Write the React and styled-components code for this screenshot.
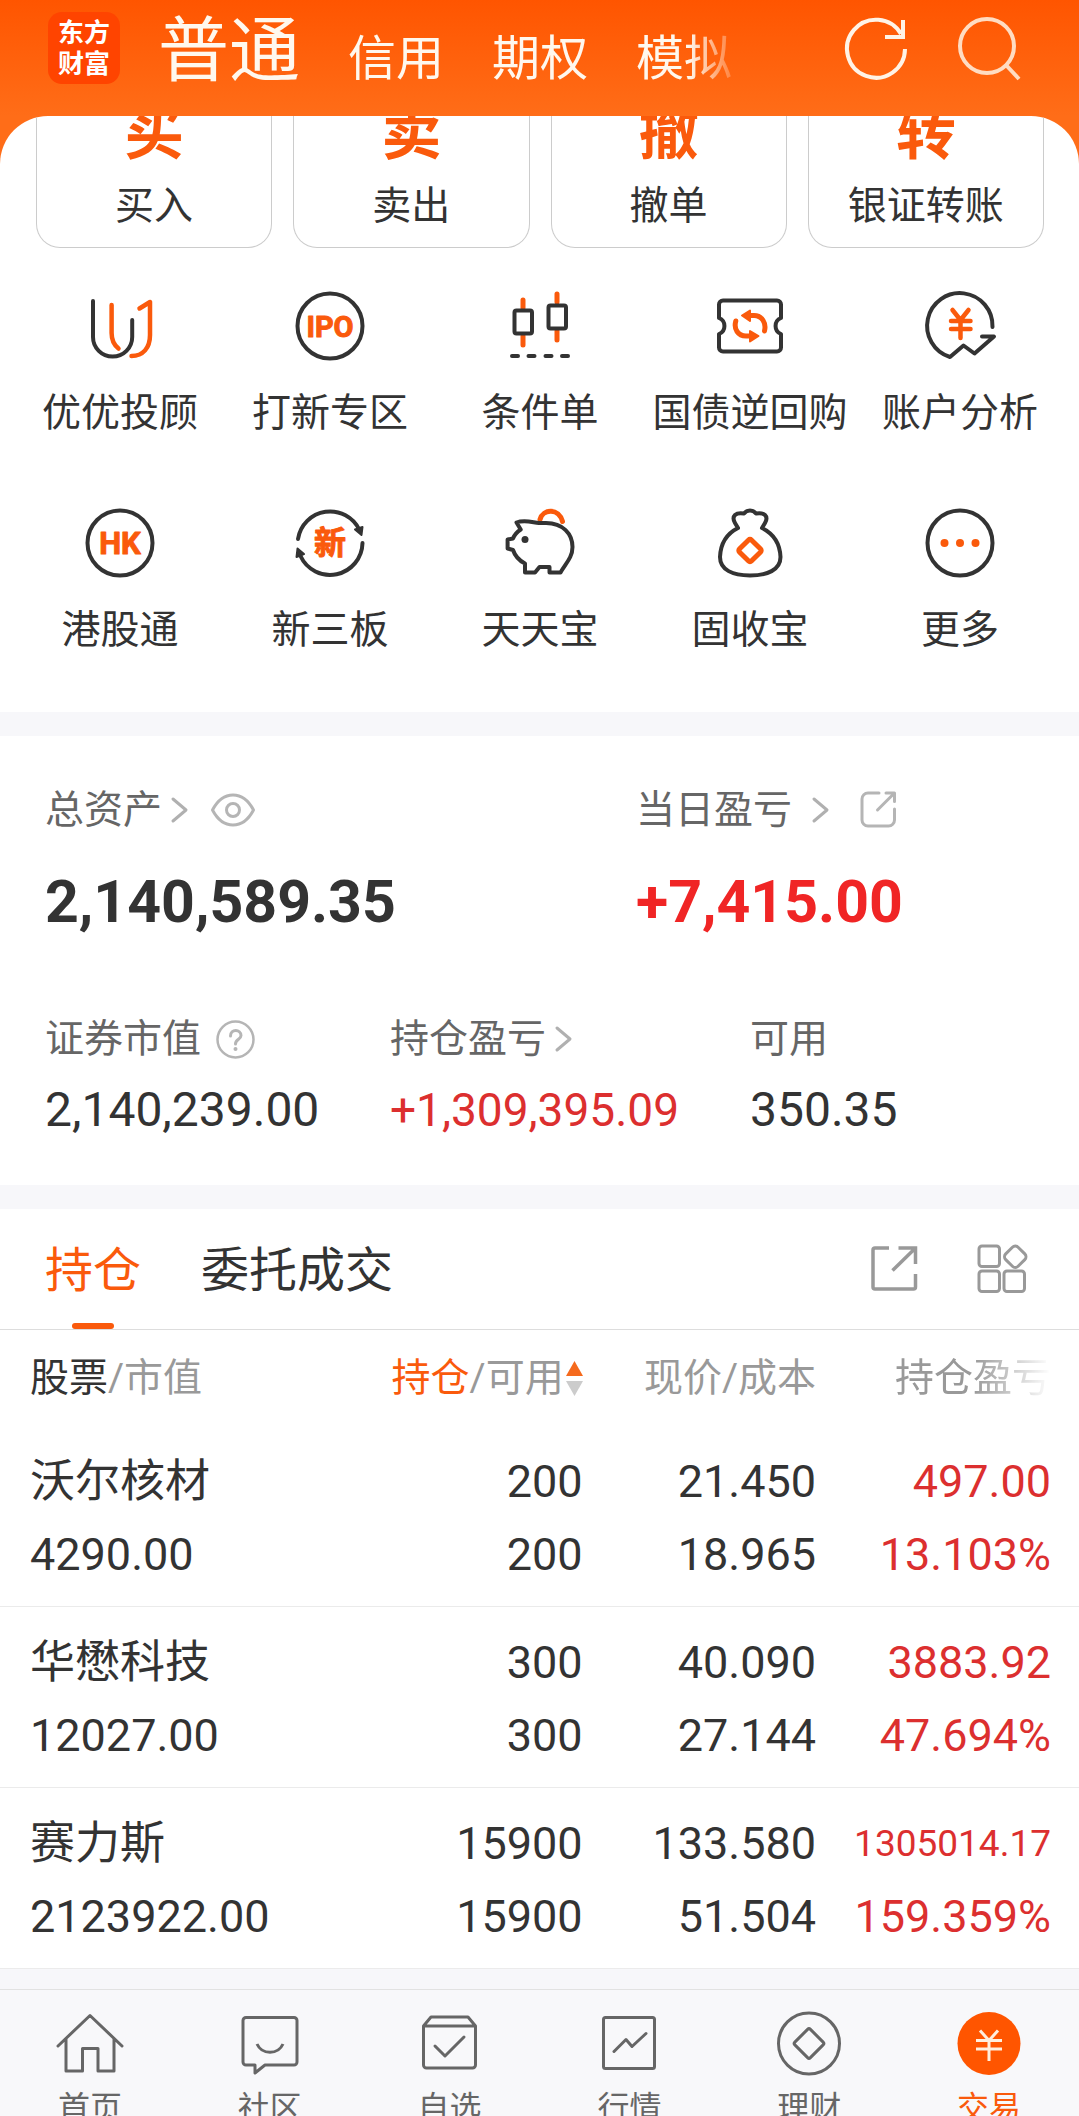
import React, { useState } from 'react';
import styled, { createGlobalStyle, css } from 'styled-components';

const ORANGE = '#fa5a0c';
const INK = '#333';
const RED = '#dc2f2f';

const GlobalStyle = createGlobalStyle`
  * {
    box-sizing: border-box;
  }
  body {
    margin: 0;
    background: #f8f8fa;
    color: ${INK};
    font-family: Roboto, 'Noto Sans CJK SC', sans-serif;
  }
  button {
    margin: 0;
    padding: 0;
    border: 0;
    background: none;
    color: inherit;
    font: inherit;
    cursor: pointer;
  }
  svg {
    display: block;
    flex: none;
    overflow: visible;
  }
`;

const Page = styled.div`
  height: 100vh;
  overflow: hidden;
  display: flex;
  flex-direction: column;
  background: linear-gradient(#ff5500 0, #ff6d18 116px);

  > * {
    flex-shrink: 0;
  }
`;

/* header */

const Header = styled.header`
  display: flex;
  align-items: center;
  height: 116px;
  padding: 0 56px 20px 48px;
  color: #fff8ee;
`;

const Logo = styled.div`
  width: 72px;
  height: 72px;
  padding-top: 6px;
  border-radius: 14px;
  background: #ff4400;
  color: #fff;
  font-size: 26px;
  font-weight: 700;
  line-height: 31px;
  text-align: center;
`;

const AccountTabs = styled.nav`
  display: flex;
  align-items: baseline;
  gap: 48px;
  margin-left: 38px;
  padding: 14px 12px 0 0;
  mask-image: linear-gradient(to right, #000 calc(100% - 56px), transparent);
`;

const AccountTab = styled.button`
  font-size: ${({ $active }) => ($active ? 71 : 48)}px;
  line-height: 84px;
  white-space: nowrap;
`;

const HeaderTools = styled.div`
  display: flex;
  gap: 48px;
  margin-left: auto;
`;

/* white sheet under the header */

const Sheet = styled.main`
  overflow: hidden;
  border-radius: 48px 48px 0 0;
  background: #fff;
`;

const Cards = styled.div`
  display: grid;
  grid-template-columns: repeat(4, 1fr);
  gap: 21px;
  padding: 0 35px 0 36px;
`;

const Card = styled.button`
  display: flex;
  flex-direction: column;
  align-items: center;
  padding-bottom: 17px;
  border: 1px solid #ccc;
  border-top: 0;
  border-radius: 0 0 24px 24px;
  font-size: 39px;
  line-height: 48px;
`;

const CardGlyph = styled.span`
  display: flex;
  align-items: flex-end;
  height: 46px;
  margin-bottom: 20px;
  overflow: hidden;
  color: ${ORANGE};
  font-size: 60px;
  font-weight: 700;
  line-height: 56px;
`;

const Shortcuts = styled.div`
  display: grid;
  grid-template-columns: repeat(5, 1fr);
  row-gap: 68px;
  padding: 40px 14px 58px 15px;
`;

const Shortcut = styled.button`
  display: flex;
  flex-direction: column;
  align-items: center;
  gap: 25px;
  font-size: 39px;
  line-height: 48px;
  white-space: nowrap;
`;

const Strip = styled.div`
  height: ${({ $height }) => $height || 24}px;
  background: #f7f7fa;
`;

/* assets */

const Assets = styled.section`
  padding: 50px 46px 47px 45px;
`;

const MainFigures = styled.div`
  display: grid;
  grid-template-columns: 591fr 397fr;
  margin-bottom: 77px;
`;

const SubFigures = styled.div`
  display: grid;
  grid-template-columns: 345fr 360fr 283fr;
`;

const FigureLabel = styled.div`
  display: flex;
  align-items: center;
  height: 48px;
  color: #666;
  font-size: 39px;
  line-height: 48px;
  white-space: nowrap;
`;

const LabelTool = styled.button`
  margin-left: ${({ $gap }) => $gap}px;
`;

const Figure = styled.div`
  color: ${({ $up }) => ($up ? RED : INK)};
  white-space: nowrap;
  ${({ $main, $up, $long }) =>
    $main
      ? css`
          margin-top: 32px;
          font-size: 59px;
          font-weight: 700;
          line-height: 72px;
          ${$up && 'color: #f02525;'}
        `
      : css`
          margin-top: 19px;
          font-size: ${$long ? 46 : 48}px;
          line-height: 56px;
        `}
`;

/* holdings */

const TabBar = styled.div`
  display: flex;
  align-items: stretch;
  gap: 60px;
  height: 121px;
  padding: 0 53px 0 45px;
  border-bottom: 1px solid #ddd;
`;

const Tab = styled.button`
  position: relative;
  font-size: 48px;
  padding-top: 4px;
  line-height: 116px;
  color: ${({ $active }) => ($active ? ORANGE : INK)};

  &::after {
    content: '';
    display: ${({ $active }) => ($active ? 'block' : 'none')};
    position: absolute;
    bottom: 0;
    left: calc(50% - 21px);
    width: 42px;
    height: 6px;
    border-radius: 3px;
    background: ${ORANGE};
  }
`;

const TabTools = styled.div`
  display: flex;
  align-items: center;
  gap: 58px;
  margin-left: auto;
`;

const HoldingsTable = styled.table`
  width: 100%;
  border-collapse: collapse;
  table-layout: fixed;

  th,
  td {
    padding: 0;
    text-align: right;
    font-weight: 400;
    white-space: nowrap;
  }
  th:first-child,
  td:first-child {
    padding-left: 30px;
    text-align: left;
  }
  th:nth-child(3),
  td:nth-child(3) {
    padding-right: 4px;
  }
  th:last-child,
  td:last-child {
    padding-right: 28px;
  }
`;

const HeadCell = styled.th`
  height: 96px;
  color: #999;
  font-size: 39px;
  line-height: 52px;
`;

const HeadMain = styled.span`
  color: ${({ $sorted }) => ($sorted ? ORANGE : INK)};
`;

const SortButton = styled.button`
  display: inline-flex;
  align-items: center;
  gap: 2px;
  vertical-align: top;
`;

const Faded = styled.span`
  mask-image: linear-gradient(to right, #000 50%, transparent);
`;

const HoldingRow = styled.tr`
  border-bottom: 1px solid #ebebeb;
`;

const Cell = styled.td`
  color: ${({ $up }) => ($up ? RED : INK)};
`;

const Line = styled.div`
  height: 73px;
  font-size: ${({ $small }) => ($small ? 37 : 45)}px;
  line-height: 73px;

  &:first-child {
    margin-top: 19px;
  }
  &:last-child {
    margin-bottom: 15px;
  }
`;

/* bottom bar */

const BottomBar = styled.nav`
  display: grid;
  grid-template-columns: repeat(6, 1fr);
  padding: 22px 0 16px;
  border-top: 1px solid #e2e2e2;
  background: #f8f8fa;
`;

const BottomLink = styled.a`
  display: flex;
  flex-direction: column;
  align-items: center;
  gap: 12px;
  color: ${({ $active }) => ($active ? ORANGE : '#666')};
  font-size: 32px;
  line-height: 40px;
  text-decoration: none;
`;

/* drawings */

const Svg = ({ size, width, height, stroke = INK, sw = 4, children }) => (
  <svg
    width={width || size}
    height={height || size}
    fill="none"
    stroke={stroke}
    strokeWidth={sw}
    strokeLinecap="round"
    strokeLinejoin="round"
    aria-hidden="true"
  >
    {children}
  </svg>
);

const iconText = {
  fill: ORANGE,
  stroke: ORANGE,
  strokeWidth: 1,
  textAnchor: 'middle',
  fontWeight: 700,
};

const RefreshIcon = () => (
  <Svg size={66} stroke="#fff3e6" sw={4}>
    <path
      d="M62 34A29 29 0 1 1 58 19M60 5V22H42"
      strokeLinecap="butt"
      strokeLinejoin="miter"
    />
  </Svg>
);

const SearchIcon = () => (
  <Svg size={66} stroke="#ffdcc2" sw={4}>
    <circle cx="30" cy="31" r="27" />
    <path d="M49 50L62 64" strokeLinecap="butt" />
  </Svg>
);

const AdvisorIcon = () => (
  <Svg size={76}>
    <path d="M11 13V49a19.6 19.6 0 0 0 39.2 0V32" />
    <path
      d="M29.6 17V45C29.6 52 32 57 36.5 60.5M57.5 20.5L68 14V47C68 60 61 68 49.5 68"
      stroke={ORANGE}
      strokeWidth="4.5"
    />
  </Svg>
);

const IpoIcon = () => (
  <Svg size={76}>
    <circle cx="38" cy="38" r="32.5" />
    <text x="38" y="48.5" fontSize="29" {...iconText}>
      IPO
    </text>
  </Svg>
);

const CandleIcon = () => (
  <Svg size={76}>
    <path
      d="M21 12V20M21 48V57M55 6V14M55 43V52"
      stroke={ORANGE}
      strokeWidth="5"
    />
    <rect x="12.5" y="22.5" width="17.5" height="23" rx="2" />
    <rect x="46.5" y="17.5" width="17.5" height="23" rx="2" />
    <path d="M10 68H16M26.5 68H32.5M43.5 68H49.5M60 68H66" />
  </Svg>
);

const RepoIcon = () => (
  <Svg size={76}>
    <path d="M11 12.5H65a4 4 0 0 1 4 4V30a8.6 8.6 0 0 0 0 16V59.5a4 4 0 0 1-4 4H11a4 4 0 0 1-4-4V46a8.6 8.6 0 0 0 0-16V16.5a4 4 0 0 1 4-4Z" />
    <path
      d="M37 27.5H42C50 27.5 54.5 35 52.5 43M23.8 33C21.5 41 26 48 34 48H39"
      stroke={ORANGE}
      strokeWidth="5"
    />
    <path
      d="M30 27.5L38 22.5V33ZM46.5 48L38 43V53.5Z"
      fill={ORANGE}
      stroke={ORANGE}
      strokeWidth="2"
    />
  </Svg>
);

const AnalysisIcon = () => (
  <Svg size={76}>
    <path d="M70.5 39A32.7 32.7 0 1 0 28 69L41.5 57.5L52.5 65.5L72 48.5H60" />
    <path
      d="M30.5 22L38.5 32L46.5 22M38.5 32V50M29 33H48.5M29 41H48.5"
      stroke={ORANGE}
      strokeWidth="4.5"
    />
  </Svg>
);

const HkIcon = () => (
  <Svg size={76}>
    <circle cx="38" cy="38" r="32.5" />
    <text x="38" y="49" fontSize="31" {...iconText}>
      HK
    </text>
  </Svg>
);

const NewBoardIcon = () => (
  <Svg size={76}>
    <path d="M6 34A32.5 32.5 0 0 1 67.5 25M70.5 38A32.5 32.5 0 0 1 8.5 51" />
    <path
      d="M63 24.5L70.5 22L69.5 30ZM5.5 43.5L12 49L4.5 52Z"
      fill={INK}
      strokeWidth="2"
    />
    <text x="38" y="49" fontSize="32" {...iconText}>
      新
    </text>
  </Svg>
);

const PiggyIcon = () => (
  <Svg size={76}>
    <path d="M38 14.5C41 3.5 57 3 60.5 16.5" stroke={ORANGE} strokeWidth="5" />
    <path d="M18.7 24.5L14.5 17.5C22 14.5 29 17 37 18H44C61 18 70.5 29 70.5 42C70.5 53 63 59 58.5 67.5H47.5V62H37.5L33 67.5H23V58.5C17 55.5 13 51 11 45L5.6 43.5V34.5L11 33.5C12.5 29.5 15 27 18.7 24.5Z" />
    <circle cx="23" cy="34.5" r="3.5" fill={INK} stroke="none" />
  </Svg>
);

const BagIcon = () => (
  <Svg size={76}>
    <path d="M26 23L23 18C19 11 24 7 32 8.5C35 4.5 41 4.5 44 8.5C52 7 57 11 53 18L50 23C62 29 68 40 68.5 52C68.5 65 55 70.5 38 70.5S8 65 8 52C8.5 40 14 29 26 23Z" />
    <rect
      x="29.5"
      y="37"
      width="17"
      height="17"
      rx="2"
      transform="rotate(45 38 45.5)"
      stroke={ORANGE}
      strokeWidth="5"
    />
  </Svg>
);

const MoreIcon = () => (
  <Svg size={76}>
    <circle cx="38" cy="38" r="32.5" />
    <g fill={ORANGE} stroke="none">
      <circle cx="22.5" cy="38" r="4" />
      <circle cx="38" cy="38" r="4" />
      <circle cx="53.5" cy="38" r="4" />
    </g>
  </Svg>
);

const Chevron = () => (
  <Svg width={17} height={26} stroke="#b0b0b0" sw={3}>
    <path d="M2 2L15 13L2 24" />
  </Svg>
);

const EyeIcon = () => (
  <Svg width={44} height={32} stroke="#b5b5b5" sw={3}>
    <path d="M1.5 16C12 -4 32 -4 42.5 16C32 36 12 36 1.5 16Z" />
    <circle cx="22" cy="16" r="6.5" />
  </Svg>
);

const HelpIcon = () => (
  <Svg size={39} stroke="#b5b5b5" sw={2.5}>
    <circle cx="19.5" cy="19.5" r="18" />
    <path
      d="M14.5 16C14.5 8.5 25 9 25 15.5C25 19.5 19.5 19 19.5 24"
      strokeWidth="3"
    />
    <circle cx="19.5" cy="29" r="2" fill="#b5b5b5" stroke="none" />
  </Svg>
);

const ShareSmallIcon = () => (
  <Svg size={38} stroke="#b5b5b5" sw={3}>
    <path d="M20 2H9a6 6 0 0 0-6 6V29a6 6 0 0 0 6 6H29.5a6 6 0 0 0 6-6V18M27 2H35.5V10.5M35 2.5L18.5 19" />
  </Svg>
);

const ShareIcon = () => (
  <Svg size={48} stroke="#999" sw={3.5}>
    <path
      d="M19 3H5a2 2 0 0 0-2 2V42a2 2 0 0 0 2 2H43.5a2 2 0 0 0 2-2V29M28.5 3H45.5V19M45 3.5L22.5 25.5"
      strokeLinecap="butt"
      strokeLinejoin="miter"
    />
  </Svg>
);

const BlocksIcon = () => (
  <Svg size={50} stroke="#999" sw={3}>
    <rect x="3" y="2" width="20.5" height="20.5" rx="3" />
    <rect x="3" y="27" width="20.5" height="20.5" rx="3" />
    <rect x="28" y="27" width="20.5" height="20.5" rx="3" />
    <rect
      x="30.5"
      y="4"
      width="17.5"
      height="17.5"
      rx="4"
      transform="rotate(45 39.25 12.75)"
    />
  </Svg>
);

const SortArrows = () => (
  <svg width="17" height="36" aria-hidden="true">
    <path d="M8.5 1L17 16H0Z" fill="#f56a1d" />
    <path d="M8.5 36L17 21H0Z" fill="#ccc" />
  </svg>
);

const HomeIcon = () => (
  <Svg size={64} stroke="#666" sw={3}>
    <path d="M0 34L32 3.5L64 34M8 27V59H24.5V36.5H40V59H56V27" />
  </Svg>
);

const CommunityIcon = () => (
  <Svg size={64} stroke="#666" sw={3}>
    <path d="M8 5.5H56a3 3 0 0 1 3 3V50a3 3 0 0 1-3 3H27L17 61V53H8a3 3 0 0 1-3-3V8.5a3 3 0 0 1 3-3Z" />
    <path d="M19 32C24 43 40 43 45 32" strokeLinecap="butt" />
  </Svg>
);

const WatchIcon = () => (
  <Svg size={64} stroke="#666" sw={3}>
    <path d="M5.5 14L13 5H50L57.5 14V53a3 3 0 0 1-3 3H8.5a3 3 0 0 1-3-3ZM5.5 14H57.5" />
    <path d="M17 34L27 44L46 25" />
  </Svg>
);

const MarketIcon = () => (
  <Svg size={64} stroke="#666" sw={3}>
    <rect x="6.5" y="5.5" width="51" height="51" rx="2" />
    <path d="M17 39.5L29 27.5L35 34.5L49 21.5" />
  </Svg>
);

const WealthIcon = () => (
  <Svg size={64} stroke="#666" sw={3}>
    <circle cx="32" cy="31.5" r="30.5" />
    <rect
      x="21"
      y="20.5"
      width="22"
      height="22"
      rx="2"
      transform="rotate(45 32 31.5)"
    />
  </Svg>
);

const TradeIcon = () => (
  <Svg size={64} stroke="#ffeedd" sw={3}>
    <circle cx="32" cy="31.5" r="31.5" fill="#ff5500" stroke="none" />
    <path
      d="M23 18.5L32 28.5L41 18.5M32 28.5V49M19 28.5H45M19 37H45"
      strokeLinecap="butt"
    />
  </Svg>
);

/* data */

const accounts = ['普通', '信用', '期权', '模拟'];

const cards = [
  ['买', '买入'],
  ['卖', '卖出'],
  ['撤', '撤单'],
  ['转', '银证转账'],
];

const shortcuts = [
  ['优优投顾', AdvisorIcon],
  ['打新专区', IpoIcon],
  ['条件单', CandleIcon],
  ['国债逆回购', RepoIcon],
  ['账户分析', AnalysisIcon],
  ['港股通', HkIcon],
  ['新三板', NewBoardIcon],
  ['天天宝', PiggyIcon],
  ['固收宝', BagIcon],
  ['更多', MoreIcon],
];

const holdings = [
  {
    name: '沃尔核材',
    value: '4290.00',
    amount: '200',
    available: '200',
    price: '21.450',
    cost: '18.965',
    profit: '497.00',
    rate: '13.103%',
  },
  {
    name: '华懋科技',
    value: '12027.00',
    amount: '300',
    available: '300',
    price: '40.090',
    cost: '27.144',
    profit: '3883.92',
    rate: '47.694%',
  },
  {
    name: '赛力斯',
    value: '2123922.00',
    amount: '15900',
    available: '15900',
    price: '133.580',
    cost: '51.504',
    profit: '1305014.17',
    rate: '159.359%',
  },
];

const bottomLinks = [
  ['首页', HomeIcon],
  ['社区', CommunityIcon],
  ['自选', WatchIcon],
  ['行情', MarketIcon],
  ['理财', WealthIcon],
  ['交易', TradeIcon],
];

function Holding({ stock }) {
  return (
    <HoldingRow>
      <Cell>
        <Line>{stock.name}</Line>
        <Line>{stock.value}</Line>
      </Cell>
      <Cell>
        <Line>{stock.amount}</Line>
        <Line>{stock.available}</Line>
      </Cell>
      <Cell>
        <Line>{stock.price}</Line>
        <Line>{stock.cost}</Line>
      </Cell>
      <Cell $up>
        <Line $small={stock.profit.length > 9}>{stock.profit}</Line>
        <Line>{stock.rate}</Line>
      </Cell>
    </HoldingRow>
  );
}

export default function App() {
  const [account, setAccount] = useState('普通');
  const [tab, setTab] = useState('持仓');

  return (
    <>
      <GlobalStyle />
      <Page>
        <Header>
          <Logo>
            东方
            <br />
            财富
          </Logo>
          <AccountTabs>
            {accounts.map((name) => (
              <AccountTab
                key={name}
                $active={name === account}
                onClick={() => setAccount(name)}
              >
                {name}
              </AccountTab>
            ))}
          </AccountTabs>
          <HeaderTools>
            <button aria-label="刷新">
              <RefreshIcon />
            </button>
            <button aria-label="搜索">
              <SearchIcon />
            </button>
          </HeaderTools>
        </Header>

        <Sheet>
          <Cards>
            {cards.map(([glyph, label]) => (
              <Card key={label}>
                <CardGlyph>{glyph}</CardGlyph>
                {label}
              </Card>
            ))}
          </Cards>
          <Shortcuts>
            {shortcuts.map(([label, Icon]) => (
              <Shortcut key={label}>
                <Icon />
                {label}
              </Shortcut>
            ))}
          </Shortcuts>

          <Strip />

          <Assets>
            <MainFigures>
              <div>
                <FigureLabel>
                  总资产
                  <LabelTool $gap={9} aria-label="总资产详情">
                    <Chevron />
                  </LabelTool>
                  <LabelTool $gap={23} aria-label="隐藏金额">
                    <EyeIcon />
                  </LabelTool>
                </FigureLabel>
                <Figure $main>2,140,589.35</Figure>
              </div>
              <div>
                <FigureLabel>
                  当日盈亏
                  <LabelTool $gap={20} aria-label="当日盈亏详情">
                    <Chevron />
                  </LabelTool>
                  <LabelTool $gap={30} aria-label="分享盈亏">
                    <ShareSmallIcon />
                  </LabelTool>
                </FigureLabel>
                <Figure $main $up>
                  +7,415.00
                </Figure>
              </div>
            </MainFigures>
            <SubFigures>
              <div>
                <FigureLabel>
                  证券市值
                  <LabelTool $gap={15} aria-label="说明">
                    <HelpIcon />
                  </LabelTool>
                </FigureLabel>
                <Figure>2,140,239.00</Figure>
              </div>
              <div>
                <FigureLabel>
                  持仓盈亏
                  <LabelTool $gap={9} aria-label="持仓盈亏详情">
                    <Chevron />
                  </LabelTool>
                </FigureLabel>
                <Figure $up $long>
                  +1,309,395.09
                </Figure>
              </div>
              <div>
                <FigureLabel>可用</FigureLabel>
                <Figure>350.35</Figure>
              </div>
            </SubFigures>
          </Assets>

          <Strip />

          <TabBar>
            {['持仓', '委托成交'].map((name) => (
              <Tab key={name} $active={name === tab} onClick={() => setTab(name)}>
                {name}
              </Tab>
            ))}
            <TabTools>
              <button aria-label="分享持仓">
                <ShareIcon />
              </button>
              <button aria-label="更多功能">
                <BlocksIcon />
              </button>
            </TabTools>
          </TabBar>

          <HoldingsTable>
            <colgroup>
              <col width="35%" />
              <col width="19%" />
              <col width="22%" />
              <col width="24%" />
            </colgroup>
            <thead>
              <tr>
                <HeadCell>
                  <HeadMain>股票</HeadMain>/市值
                </HeadCell>
                <HeadCell>
                  <SortButton>
                    <span>
                      <HeadMain $sorted>持仓</HeadMain>/可用
                    </span>
                    <SortArrows />
                  </SortButton>
                </HeadCell>
                <HeadCell>现价/成本</HeadCell>
                <HeadCell>
                  <Faded>持仓盈亏</Faded>
                </HeadCell>
              </tr>
            </thead>
            <tbody>
              {holdings.map((stock) => (
                <Holding key={stock.name} stock={stock} />
              ))}
            </tbody>
          </HoldingsTable>
          <Strip $height={20} />
        </Sheet>

        <BottomBar>
          {bottomLinks.map(([label, Icon]) => (
            <BottomLink key={label} href="#" $active={label === '交易'}>
              <Icon />
              {label}
            </BottomLink>
          ))}
        </BottomBar>
      </Page>
    </>
  );
}
